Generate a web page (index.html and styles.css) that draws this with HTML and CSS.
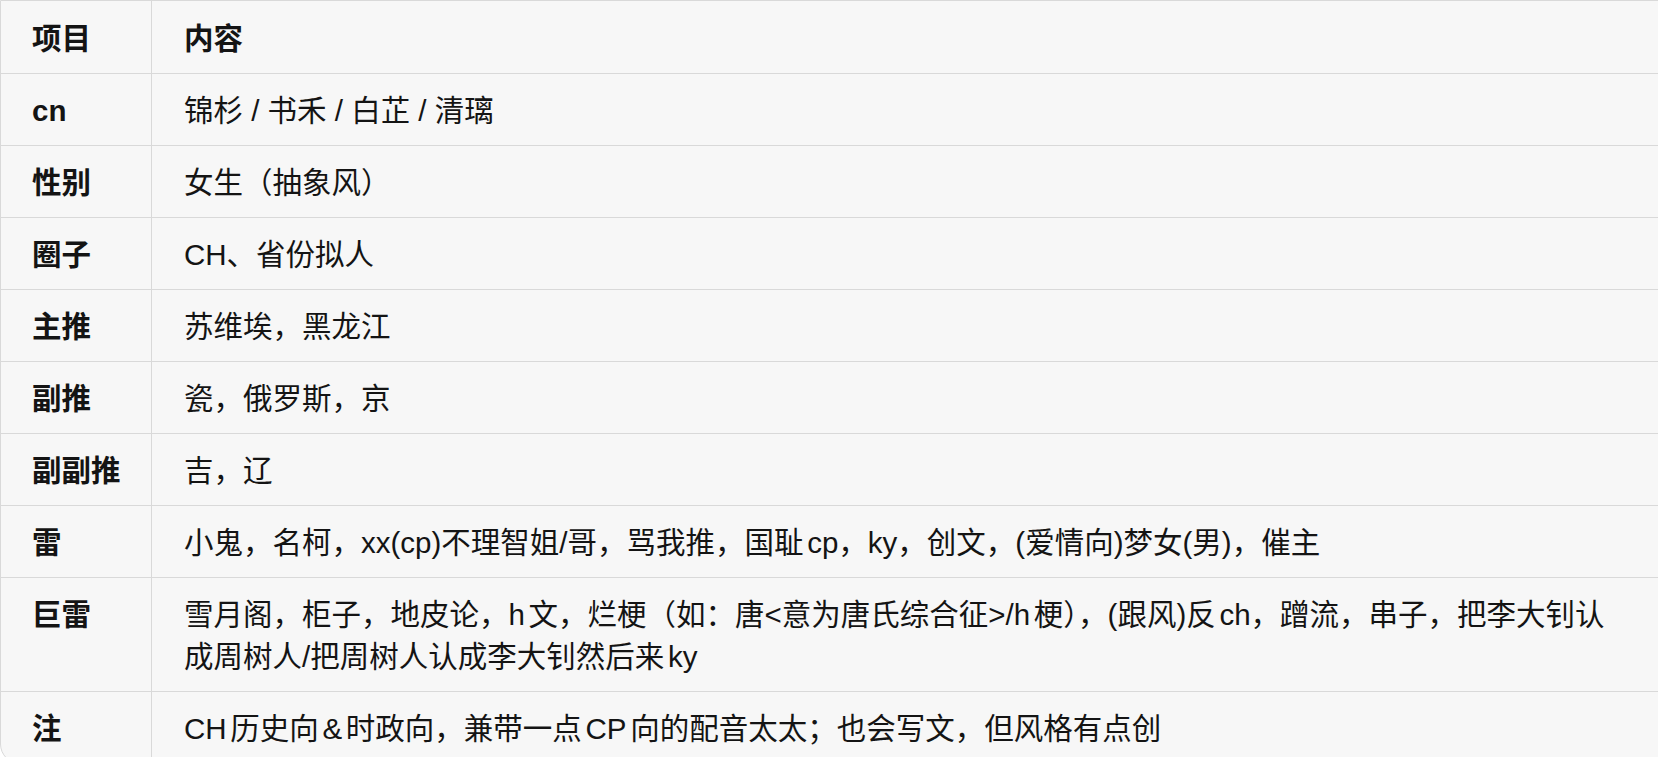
FILE: index.html
```html
<!DOCTYPE html>
<html lang="zh-CN">
<head>
<meta charset="utf-8">
<title>资料表</title>
<link rel="stylesheet" href="styles.css">
</head>
<body>
<div class="sheet">
  <table class="info">
    <thead>
      <tr><th class="key">项目</th><th class="val">内容</th></tr>
    </thead>
    <tbody>
      <tr><td class="key">cn</td><td class="val">锦杉 / 书禾 / 白芷 / 清璃</td></tr>
      <tr><td class="key">性别</td><td class="val">女生（抽象风）</td></tr>
      <tr><td class="key">圈子</td><td class="val">CH、省份拟人</td></tr>
      <tr><td class="key">主推</td><td class="val">苏维埃，黑龙江</td></tr>
      <tr><td class="key">副推</td><td class="val">瓷，俄罗斯，京</td></tr>
      <tr><td class="key">副副推</td><td class="val">吉，辽</td></tr>
      <tr><td class="key">雷</td><td class="val">小鬼，名柯，xx(cp)不理智姐/哥，骂我推，国耻cp，ky，创文，(爱情向)梦女(男)，催主</td></tr>
      <tr><td class="key">巨雷</td><td class="val">雪月阁，柜子，地皮论，h文，烂梗（如：唐&lt;意为唐氏综合征&gt;/h梗），(跟风)反ch，蹭流，串子，把李大钊认成周树人/把周树人认成李大钊然后来ky</td></tr>
      <tr><td class="key">注</td><td class="val">CH历史向&amp;时政向，兼带一点CP向的配音太太；也会写文，但风格有点创</td></tr>
    </tbody>
  </table>
</div>
</body>
</html>
```

FILE: styles.css
```css
html, body {
  margin: 0;
  padding: 0;
  overflow: hidden;
  background: #ffffff;
}

body {
  font-family: "Liberation Sans", "Noto Sans CJK SC", sans-serif;
  color: #141414;
}

.sheet {
  width: 1700px;
  background: #f7f7f7;
  border: 1px solid #d9d9d9;
  border-radius: 0 0 20px 20px;
  overflow: hidden;
}

.info {
  width: 100%;
  border-collapse: separate;
  border-spacing: 0;
  table-layout: fixed;
  font-size: 29.5px;
  line-height: 42px;
  text-autospace: normal;
}

.info th,
.info td {
  text-align: left;
  vertical-align: top;
  padding: 16px 31px 13px 31px;
  border-bottom: 1px solid #d9d9d9;
}

.info thead th {
  padding-top: 17px;
}

.info tbody tr:last-child td {
  border-bottom: none;
}

.info .key {
  width: 90px;
  padding-right: 29px;
  white-space: nowrap;
  font-weight: 700;
  border-right: 1px solid #d9d9d9;
}

.info .val {
  padding-left: 32px;
  padding-right: 78px;
  font-weight: 400;
}

.info th.val {
  font-weight: 700;
}
```
